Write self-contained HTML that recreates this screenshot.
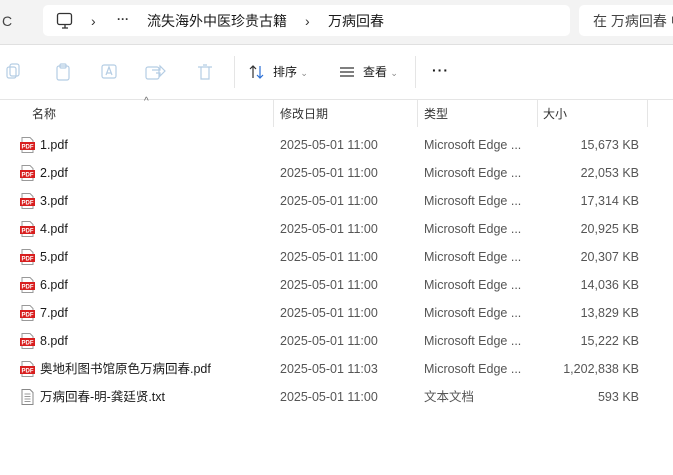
<!DOCTYPE html><html><head><meta charset="utf-8"><style>
body{margin:0;width:673px;height:475px;overflow:hidden;background:#fff;font-family:"Liberation Sans","Noto Sans CJK SC",sans-serif;font-size:12px;color:#1a1a1a;position:relative}
.top{position:absolute;left:0;top:0;width:673px;height:44px;background:#f3f3f3;border-bottom:1px solid #e0e0e0}
.addr{position:absolute;left:43px;top:5px;width:527px;height:31px;background:#fff;border-radius:5px}
.search{position:absolute;left:579px;top:5px;width:110px;height:31px;background:#fff;border-radius:5px}
.t{position:absolute;white-space:nowrap;line-height:16px}
.sep{position:absolute;width:1px;background:#e5e5e5}
.row{position:absolute;left:0;width:673px;height:28px}
.row span{position:absolute;top:7px;white-space:nowrap;font-size:12.5px;line-height:14px}
.pdf{position:absolute;left:20px;top:6px;width:15px;height:16px}
</style></head><body>
<div class="top">
<div class="t" style="left:2px;top:13px;color:#444;font-size:14px">C</div>
<div class="addr"></div>
<div class="search"></div>
<svg class="t" style="left:56px;top:12px" width="18" height="18"><rect x="1.5" y="1.5" width="14" height="11" rx="2" fill="none" stroke="#333" stroke-width="1.3"/><path d="M6 16h6M9 12.5v3.5" stroke="#333" stroke-width="1.3"/></svg>
<div class="t" style="left:91px;top:13px;color:#333;font-size:14px">›</div>
<div class="t" style="left:117px;top:11px;color:#333;font-weight:bold">···</div>
<div class="t" style="left:147px;top:13px;font-size:14px">流失海外中医珍贵古籍</div>
<div class="t" style="left:305px;top:13px;color:#333;font-size:14px">›</div>
<div class="t" style="left:328px;top:13px;font-size:14px">万病回春</div>
<div class="t" style="left:593px;top:13px;font-size:14px;color:#444">在 万病回春 中</div>
</div>
<svg class="t" style="left:6px;top:62px" width="210" height="20" fill="none" stroke="#b5cde4" stroke-width="1.2"><rect x="4" y="2" width="9" height="12" rx="2"/><rect x="1" y="5" width="9" height="11" rx="2"/>
<rect x="51" y="4" width="12" height="14" rx="2"/><rect x="54" y="2" width="6" height="4" rx="1"/>
<rect x="96" y="3" width="14" height="13" rx="2"/><path d="M100 13l3-8 3 8M101 11h4"/>
<path d="M146 8h8v-4l5 5-5 5v-3h-4"/><rect x="140" y="5" width="13" height="12" rx="2"/>
<path d="M192 5h14M195 5v12h8V5M197 3h4"/></svg>
<div class="sep" style="left:234px;top:56px;height:32px"></div>
<svg class="t" style="left:248px;top:63px" width="18" height="18" fill="none" stroke="#333" stroke-width="1.2"><path d="M5 15V3M2 6l3-3 3 3"/><path d="M12 3v12M9 12l3 3 3-3" stroke="#2a6fd6"/></svg>
<div class="t" style="left:273px;top:64px;font-size:12px">排序 <span style="color:#888;font-size:9px">⌄</span></div>
<svg class="t" style="left:339px;top:65px" width="16" height="14" stroke="#333" stroke-width="1.2"><path d="M1 3h14M1 7h14M1 11h14"/></svg>
<div class="t" style="left:363px;top:64px;font-size:12px">查看 <span style="color:#888;font-size:9px">⌄</span></div>
<div class="sep" style="left:415px;top:56px;height:32px"></div>
<div class="t" style="left:432px;top:62px;font-size:14px;font-weight:bold;letter-spacing:1px">···</div>
<div style="position:absolute;left:0;top:99px;width:673px;height:1px;background:#e5e5e5"></div>
<div class="t" style="left:144px;top:94px;color:#666;font-size:10px">^</div>
<div class="t" style="left:32px;top:106px;color:#333">名称</div>
<div class="t" style="left:280px;top:106px;color:#333">修改日期</div>
<div class="t" style="left:424px;top:106px;color:#333">类型</div>
<div class="t" style="left:543px;top:106px;color:#333">大小</div>
<div class="sep" style="left:273px;top:100px;height:27px"></div>
<div class="sep" style="left:417px;top:100px;height:27px"></div>
<div class="sep" style="left:537px;top:100px;height:27px"></div>
<div class="sep" style="left:647px;top:100px;height:27px"></div>
<div id="rows"></div>
<script>
var d=[["1.pdf","11:00","15,673"],["2.pdf","11:00","22,053"],["3.pdf","11:00","17,314"],["4.pdf","11:00","20,925"],["5.pdf","11:00","20,307"],["6.pdf","11:00","14,036"],["7.pdf","11:00","13,829"],["8.pdf","11:00","15,222"],["奥地利图书馆原色万病回春.pdf","11:03","1,202,838"],["万病回春-明-龚廷贤.txt","11:00","593"]];
var h="";d.forEach(function(r,i){var txt=i==9;var ic=txt?'<svg class="pdf" viewBox="0 0 15 16"><path d="M2 .5h8l3 3v12H2z" fill="#fff" stroke="#888"/><path d="M4.5 5h6M4.5 7.5h6M4.5 10h6M4.5 12.5h6" stroke="#999"/></svg>':'<svg class="pdf" viewBox="0 0 15 16"><path d="M2 .5h8l3 3v12H2z" fill="#fff" stroke="#999"/><rect x="0" y="5" width="15" height="8" fill="#d81e1e"/><text x="7.5" y="11.3" font-size="6" font-weight="bold" fill="#fff" text-anchor="middle" font-family="Liberation Sans">PDF</text></svg>';
h+='<div class="row" style="top:'+(131+i*28)+'px">'+ic+'<span style="left:40px">'+r[0]+'</span><span style="left:280px;color:#555">2025-05-01 '+r[1]+'</span><span style="left:424px;color:#555">'+(txt?"文本文档":"Microsoft Edge ...")+'</span><span style="right:34px;color:#555">'+r[2]+' KB</span></div>';});
document.getElementById("rows").innerHTML=h;
</script>
</body></html>
